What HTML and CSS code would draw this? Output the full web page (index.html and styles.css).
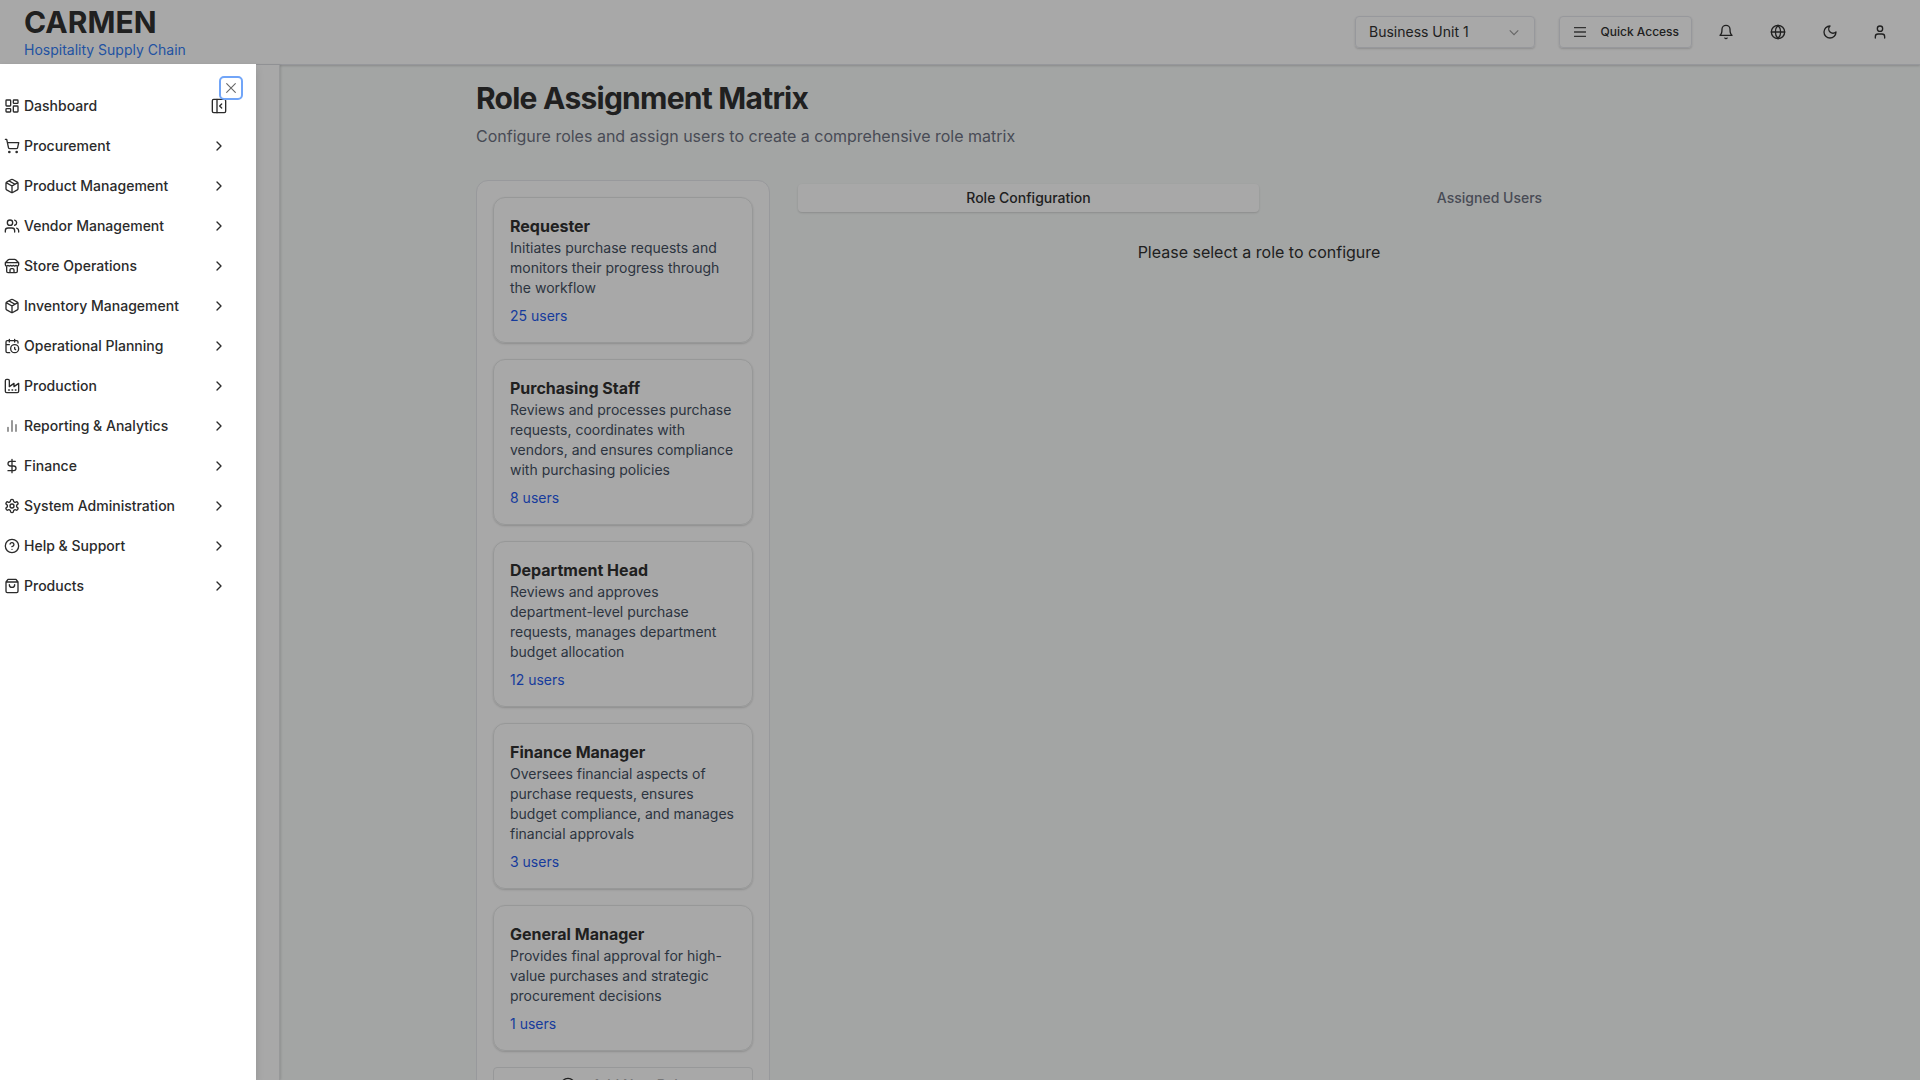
FILE: index.html
```html
<!DOCTYPE html>
<html lang="en">
<head>
<meta charset="utf-8">
<title>Role Assignment Matrix</title>
<link rel="stylesheet" href="styles.css">
</head>
<body>
<header class="header">
  <div class="brand">
    <div class="brand-name">CARMEN</div>
    <div class="brand-tag">Hospitality Supply Chain</div>
  </div>
  <div class="actions">
    <div class="select"><span>Business Unit 1</span>
      <svg class="caret" viewBox="0 0 15 15"><path d="M3.5 6l4 4 4-4"/></svg>
    </div>
    <div class="quick"><svg class="burger" viewBox="0 0 15 15"><path d="M1.9 3.5h11.2M1.9 7.5h11.2M1.9 11.5h11.2"/></svg><span>Quick Access</span></div>
    <div class="icons">
      <svg class="icon" viewBox="0 0 24 24"><path d="M6 8a6 6 0 0 1 12 0c0 7 3 9 3 9H3s3-2 3-9"/><path d="M10.3 21a1.94 1.94 0 0 0 3.4 0"/></svg>
      <svg class="icon" viewBox="0 0 24 24"><circle cx="12" cy="12" r="10"/><path d="M12 2a14.5 14.5 0 0 0 0 20 14.5 14.5 0 0 0 0-20M2 12h20"/></svg>
      <svg class="icon" viewBox="0 0 24 24"><path d="M12 3a6 6 0 0 0 9 9 9 9 0 1 1-9-9Z"/></svg>
      <svg class="icon user" viewBox="0 0 24 24"><path d="M19 21v-2a4 4 0 0 0-4-4H9a4 4 0 0 0-4 4v2"/><circle cx="12" cy="7" r="4"/></svg>
    </div>
  </div>
</header>
<div class="body">
  <aside class="rail">
    <nav class="sheet">
      <div class="item"><svg class="icon" viewBox="0 0 24 24"><rect x="3" y="3" width="7" height="9" rx="1"/><rect x="14" y="3" width="7" height="5" rx="1"/><rect x="14" y="12" width="7" height="9" rx="1"/><rect x="3" y="16" width="7" height="5" rx="1"/></svg><span>Dashboard</span><svg class="icon" viewBox="0 0 24 24"><rect x="2" y="2" width="20" height="20" rx="2"/><path d="M9 2v20M16 15l-3-3 3-3"/></svg></div>
      <div class="item"><svg class="icon" viewBox="0 0 24 24"><circle cx="8" cy="21" r="1"/><circle cx="19" cy="21" r="1"/><path d="M2.05 2.05h2l2.66 12.42a2 2 0 0 0 2 1.58h9.78a2 2 0 0 0 1.95-1.57l1.65-7.43H5.12"/></svg><span>Procurement</span><svg class="icon" viewBox="0 0 24 24"><path d="m9 18 6-6-6-6"/></svg></div>
      <div class="item"><svg class="icon" viewBox="0 0 24 24"><path d="m7.5 4.27 9 5.15M21 8a2 2 0 0 0-1-1.73l-7-4a2 2 0 0 0-2 0l-7 4A2 2 0 0 0 3 8v8a2 2 0 0 0 1 1.73l7 4a2 2 0 0 0 2 0l7-4A2 2 0 0 0 21 16ZM3.3 7l8.7 5 8.7-5M12 22V12"/></svg><span>Product Management</span><svg class="icon" viewBox="0 0 24 24"><path d="m9 18 6-6-6-6"/></svg></div>
      <div class="item"><svg class="icon" viewBox="0 0 24 24"><path d="M16 21v-2a4 4 0 0 0-4-4H6a4 4 0 0 0-4 4v2"/><circle cx="9" cy="7" r="4"/><path d="M22 21v-2a4 4 0 0 0-3-3.87M16 3.13a4 4 0 0 1 0 7.75"/></svg><span>Vendor Management</span><svg class="icon" viewBox="0 0 24 24"><path d="m9 18 6-6-6-6"/></svg></div>
      <div class="item"><svg class="icon" viewBox="0 0 24 24"><path d="m2 7 4.41-4.41A2 2 0 0 1 7.83 2h8.34a2 2 0 0 1 1.42.59L22 7M4 12v8a2 2 0 0 0 2 2h12a2 2 0 0 0 2-2v-8M15 22v-4a2 2 0 0 0-2-2h-2a2 2 0 0 0-2 2v4M2 7h20M22 7v3a2 2 0 0 1-2 2a2.7 2.7 0 0 1-1.59-.63.7.7 0 0 0-.82 0A2.7 2.7 0 0 1 16 12a2.7 2.7 0 0 1-1.59-.63.7.7 0 0 0-.82 0A2.7 2.7 0 0 1 12 12a2.7 2.7 0 0 1-1.59-.63.7.7 0 0 0-.82 0A2.7 2.7 0 0 1 8 12a2.7 2.7 0 0 1-1.59-.63.7.7 0 0 0-.82 0A2.7 2.7 0 0 1 4 12a2 2 0 0 1-2-2V7"/></svg><span>Store Operations</span><svg class="icon" viewBox="0 0 24 24"><path d="m9 18 6-6-6-6"/></svg></div>
      <div class="item"><svg class="icon" viewBox="0 0 24 24"><path d="m7.5 4.27 9 5.15M21 8a2 2 0 0 0-1-1.73l-7-4a2 2 0 0 0-2 0l-7 4A2 2 0 0 0 3 8v8a2 2 0 0 0 1 1.73l7 4a2 2 0 0 0 2 0l7-4A2 2 0 0 0 21 16ZM3.3 7l8.7 5 8.7-5M12 22V12"/></svg><span>Inventory Management</span><svg class="icon" viewBox="0 0 24 24"><path d="m9 18 6-6-6-6"/></svg></div>
      <div class="item"><svg class="icon" viewBox="0 0 24 24"><path d="M21 7.5V6a2 2 0 0 0-2-2H5a2 2 0 0 0-2 2v14a2 2 0 0 0 2 2h3.5M16 2v4M8 2v4M3 10h5M17.5 17.5 16 16.3V14"/><circle cx="16" cy="16" r="6"/></svg><span>Operational Planning</span><svg class="icon" viewBox="0 0 24 24"><path d="m9 18 6-6-6-6"/></svg></div>
      <div class="item"><svg class="icon" viewBox="0 0 24 24"><path d="M2 20a2 2 0 0 0 2 2h16a2 2 0 0 0 2-2V8l-7 5V8l-7 5V4a2 2 0 0 0-2-2H4a2 2 0 0 0-2 2ZM17 18h1M12 18h1M7 18h1"/></svg><span>Production</span><svg class="icon" viewBox="0 0 24 24"><path d="m9 18 6-6-6-6"/></svg></div>
      <div class="item"><svg class="icon bars" viewBox="0 0 24 24"><path d="M12 20V4M18 20V10M6 20v-6"/></svg><span>Reporting &amp; Analytics</span><svg class="icon" viewBox="0 0 24 24"><path d="m9 18 6-6-6-6"/></svg></div>
      <div class="item"><svg class="icon" viewBox="0 0 24 24"><path d="M12 2v20M17 5H9.5a3.5 3.5 0 0 0 0 7h5a3.5 3.5 0 0 1 0 7H6"/></svg><span>Finance</span><svg class="icon" viewBox="0 0 24 24"><path d="m9 18 6-6-6-6"/></svg></div>
      <div class="item"><svg class="icon" viewBox="0 0 24 24"><path d="M12.22 2h-.44a2 2 0 0 0-2 2v.18a2 2 0 0 1-1 1.73l-.43.25a2 2 0 0 1-2 0l-.15-.08a2 2 0 0 0-2.73.73l-.22.38a2 2 0 0 0 .73 2.73l.15.1a2 2 0 0 1 1 1.72v.51a2 2 0 0 1-1 1.74l-.15.09a2 2 0 0 0-.73 2.73l.22.38a2 2 0 0 0 2.73.73l.15-.08a2 2 0 0 1 2 0l.43.25a2 2 0 0 1 1 1.73V20a2 2 0 0 0 2 2h.44a2 2 0 0 0 2-2v-.18a2 2 0 0 1 1-1.73l.43-.25a2 2 0 0 1 2 0l.15.08a2 2 0 0 0 2.73-.73l.22-.39a2 2 0 0 0-.73-2.73l-.15-.08a2 2 0 0 1-1-1.74v-.5a2 2 0 0 1 1-1.74l.15-.09a2 2 0 0 0 .73-2.73l-.22-.38a2 2 0 0 0-2.73-.73l-.15.08a2 2 0 0 1-2 0l-.43-.25a2 2 0 0 1-1-1.73V4a2 2 0 0 0-2-2z"/><circle cx="12" cy="12" r="3"/></svg><span>System Administration</span><svg class="icon" viewBox="0 0 24 24"><path d="m9 18 6-6-6-6"/></svg></div>
      <div class="item"><svg class="icon" viewBox="0 0 24 24"><circle cx="12" cy="12" r="10"/><path d="M9.09 9a3 3 0 0 1 5.83 1c0 2-3 3-3 3M12 17h.01"/></svg><span>Help &amp; Support</span><svg class="icon" viewBox="0 0 24 24"><path d="m9 18 6-6-6-6"/></svg></div>
      <div class="item"><svg class="icon" viewBox="0 0 24 24"><path d="M6 2 3 6v14a2 2 0 0 0 2 2h14a2 2 0 0 0 2-2V6l-3-4ZM3 6h18M16 10a4 4 0 0 1-8 0"/></svg><span>Products</span><svg class="icon" viewBox="0 0 24 24"><path d="m9 18 6-6-6-6"/></svg></div>
      <button class="close" aria-label="Close"><svg class="icon" viewBox="0 0 24 24"><path d="M18.5 5.5l-13 13M5.5 5.5l13 13"/></svg></button>
    </nav>
  </aside>
  <main class="main">
    <h1>Role Assignment Matrix</h1>
    <p class="lead">Configure roles and assign users to create a comprehensive role matrix</p>
    <div class="grid">
      <section class="roles">
        <article class="role"><h3>Requester</h3><p>Initiates purchase requests and monitors their progress through the workflow</p><span>25 users</span></article>
        <article class="role"><h3>Purchasing Staff</h3><p>Reviews and processes purchase requests, coordinates with vendors, and ensures compliance with purchasing policies</p><span>8 users</span></article>
        <article class="role"><h3>Department Head</h3><p>Reviews and approves department-level purchase requests, manages department budget allocation</p><span>12 users</span></article>
        <article class="role"><h3>Finance Manager</h3><p>Oversees financial aspects of purchase requests, ensures budget compliance, and manages financial approvals</p><span>3 users</span></article>
        <article class="role"><h3>General Manager</h3><p>Provides final approval for high-value purchases and strategic procurement decisions</p><span>1 users</span></article>
        <div class="add"><svg class="icon" viewBox="0 0 24 24"><circle cx="12" cy="12" r="10"/><path d="M8 12h8M12 8v8"/></svg><span>Add New Role</span></div>
      </section>
      <section class="config">
        <div class="tabs"><div class="tab active">Role Configuration</div><div class="tab">Assigned Users</div></div>
        <p class="empty">Please select a role to configure</p>
      </section>
    </div>
  </main>
</div>
</body>
</html>
```
FILE: styles.css
```css
* { box-sizing: border-box; margin: 0; }
body {
  height: 1080px;
  overflow: hidden;
  display: flex;
  flex-direction: column;
  background: #a3a5a4;
  color: #202020;
  font: 14px/20px Inter, sans-serif;
}
.icon {
  width: 16px;
  height: 16px;
  flex: none;
  fill: none;
  stroke: currentColor;
  stroke-width: 2;
  stroke-linecap: round;
  stroke-linejoin: round;
}
.bars { color: #666; }
.header {
  position: relative;
  height: 65px;
  flex: none;
  display: flex;
  justify-content: space-between;
  padding: 0 32px 0 24px;
  background: #a8a8a8;
  border-bottom: 1px solid #96979b;
  box-shadow: 0 1px 2px rgba(0, 0, 0, .16);
  z-index: 1;
}
.brand { padding-top: 4px; }
.brand-name { font-size: 30px; line-height: 36px; font-weight: 700; }
.brand-tag { color: #2252a2; }
.actions { display: flex; align-items: center; height: 64px; }
.select, .quick {
  height: 32px;
  display: flex;
  align-items: center;
  border: 1px solid #97989c;
  border-radius: 4px;
  box-shadow: 0 1px 2px rgba(0, 0, 0, .16);
  white-space: nowrap;
}
.select { width: 180px; justify-content: space-between; padding: 0 12px 0 13px; margin-right: 24px; }
.caret { width: 16px; height: 16px; fill: none; stroke: #666; }
.burger { width: 16px; height: 16px; flex: none; fill: none; stroke: #333; stroke-width: 1.2; }
.quick { width: 133px; padding: 0 0 0 12px; gap: 12.5px; font-size: 12px; font-weight: 500; }
.icons { display: flex; gap: 36px; margin-left: 26px; }
.user { margin-left: -2px; }
.body { flex: 1; min-height: 0; display: flex; }
.rail {
  position: relative;
  width: 280px;
  flex: none;
  background: #a8a8a8;
  border-right: 1px solid #979899;
  box-shadow: 1px 0 2px rgba(0, 0, 0, .12);
  z-index: 2;
}
.sheet {
  position: relative;
  width: 256px;
  height: calc(100% + 1px);
  margin-top: -1px;
  padding: 22px 29px 0 4px;
  background: #fff;
  color: #2b2b2b;
  box-shadow: 0 4px 8px rgba(0, 0, 0, .12);
}
.item { display: flex; align-items: center; gap: 4px; height: 40px; font-weight: 500; }
.item span { flex: 1; letter-spacing: .01px; }
.close {
  position: absolute;
  top: 12px;
  right: 13px;
  width: 24px;
  height: 24px;
  padding: 2px;
  display: grid;
  place-items: center;
  border: 2px solid #71a5f8;
  border-radius: 5px;
  background: #fff;
  color: #666;
}
.close .icon { stroke-width: 1.6; }
.main { flex: 1; padding: 15px 196px 0; overflow: hidden; }
h1 { font-size: 30px; line-height: 36px; letter-spacing: -.75px; }
.lead { margin: 8px 0 32px; font-size: 16px; line-height: 24px; color: #484b55; }
.grid { display: grid; grid-template-columns: 294px 1fr; gap: 24px; }
.roles {
  display: flex;
  flex-direction: column;
  gap: 16px;
  height: 1000px;
  padding: 16px;
  border: 1px solid #98999c;
  border-radius: 12px;
  background: #a8a8a8;
}
.role {
  flex: none;
  padding: 16px;
  border: 1px solid #979898;
  border-radius: 12px;
  box-shadow: 0 1px 2px rgba(0, 0, 0, .16);
}
h3 { font-size: 16px; line-height: 24px; font-weight: 700; }
.role p { margin-bottom: 8px; color: #2c343f; }
.role span { display: block; color: #163b9c; }
.add {
  flex: none;
  display: flex;
  align-items: center;
  justify-content: center;
  gap: 16px;
  height: 36px;
  border: 1px solid #979899;
  border-radius: 4px;
  font-weight: 500;
}
.add span { color: #777; }
.tabs { display: flex; height: 36px; padding: 4px; }
.tab {
  flex: 1;
  display: grid;
  place-items: center;
  border-radius: 4px;
  font-weight: 500;
  color: #484b55;
}
.active { background: #a8a8a8; color: #202020; box-shadow: 0 1px 2px rgba(0, 0, 0, .15); }
.empty { margin-top: 24px; font-size: 16px; line-height: 24px; text-align: center; }
```
